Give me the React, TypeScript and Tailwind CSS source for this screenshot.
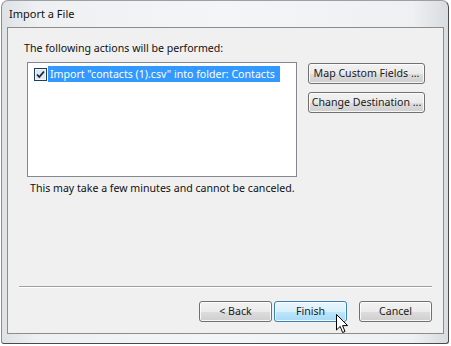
import React from "react";

const font = { fontFamily: '"Noto Sans", "Open Sans", "Liberation Sans", sans-serif' };

function WinButton({ label, hot, className }: { label: string; hot?: boolean; className?: string }) {
  return (
    <div
      className={
        "flex items-center justify-center whitespace-nowrap rounded-[3px] border text-[10.6px] text-[#1a1a1a] shadow-[inset_0_0_0_1px_rgba(255,255,255,0.8)] " +
        (hot
          ? "border-[#3c7fb1] bg-[linear-gradient(#eaf6fd_0%,#d9f0fc_50%,#bee6fd_51%,#a7d9f5_100%)] "
          : "border-[#707070] bg-[linear-gradient(#f2f2f2_0%,#ebebeb_50%,#dddddd_51%,#cfcfcf_100%)] ") +
        (className ?? "")
      }
    >
      {label}
    </div>
  );
}

function CheckBox() {
  return (
    <svg width="13" height="13" viewBox="0 0 13 13" className="shrink-0">
      <rect x="0.5" y="0.5" width="12" height="12" fill="#f4f4f4" stroke="#1d3f66" />
      <rect x="2" y="2" width="9" height="9" fill="#dfe8f2" />
      <path d="M3 6.5 L5.3 9 L10 3.5" fill="none" stroke="#16243a" strokeWidth="1.8" />
    </svg>
  );
}

function Cursor() {
  return (
    <svg width="13" height="20" viewBox="0 0 13 20" className="absolute left-[336px] top-[314px]">
      <path
        d="M0.5 0.5 L0.5 16 L4.2 12.4 L6.6 18.5 L9 17.5 L6.6 11.6 L11.6 11.6 Z"
        fill="#ffffff"
        stroke="#000000"
        strokeWidth="1"
        strokeLinejoin="round"
      />
    </svg>
  );
}

export default function App() {
  return (
    <div className="relative w-[451px] h-[346px] overflow-hidden bg-white" style={font}>
      <div className="ml-[1px] w-[448px] h-[344px] rounded-t-[7px] rounded-b-[3px] border border-[#4a4a4a] border-t-[#9aa0a6] border-l-[#8c8c8c] bg-[linear-gradient(90deg,#dfe2e5_0%,#eef0f2_8%,#f4f5f6_50%,#eef0f2_92%,#d9dcdf_100%)] flex flex-col">
        <div className="h-[26px] flex items-center pl-[7px] text-[11px] text-[#111]">Import a File</div>
        <div className="ml-[5px] w-[437px] h-[307px] border border-[#8c8c8c] bg-[#f0f0f0] flex flex-col">
          <div className="pl-[16px] mt-[12px] h-[16px] leading-[16px] text-[10.6px] text-[#111] whitespace-nowrap">
            The following actions will be performed:
          </div>
          <div className="flex mt-[6px]">
            <div className="ml-[19px] w-[270px] h-[115px] border border-[#828790] bg-white pt-[3px] pl-[6px]">
              <div className="flex items-center h-[16px]">
                <CheckBox />
                <div className="ml-[1px] h-[16px] w-[232px] bg-[#3399ff] text-white text-[10.6px] leading-[16px] pl-[2px] whitespace-nowrap">
                  Import "contacts (1).csv" into folder: Contacts
                </div>
              </div>
            </div>
            <div className="ml-[11px] flex flex-col gap-[8px] mt-[1px]">
              <WinButton label="Map Custom Fields ..." className="w-[117px] h-[21px]" />
              <WinButton label="Change Destination ..." className="w-[117px] h-[21px]" />
            </div>
          </div>
          <div className="pl-[22px] mt-[3px] h-[16px] leading-[16px] text-[10.6px] text-[#111] whitespace-nowrap">
            This may take a few minutes and cannot be canceled.
          </div>
          <div className="mt-auto ml-[11px] w-[413px] h-[2px] border-t border-[#a0a0a0] border-b-white border-b" />
          <div className="flex mt-[13px] mb-[11px]">
            <WinButton label="< Back" className="ml-[191px] w-[73px] h-[21px]" />
            <WinButton label="Finish" hot className="ml-[2px] w-[73px] h-[21px]" />
            <WinButton label="Cancel" className="ml-[12px] w-[73px] h-[21px]" />
          </div>
        </div>
      </div>
      <Cursor />
    </div>
  );
}
